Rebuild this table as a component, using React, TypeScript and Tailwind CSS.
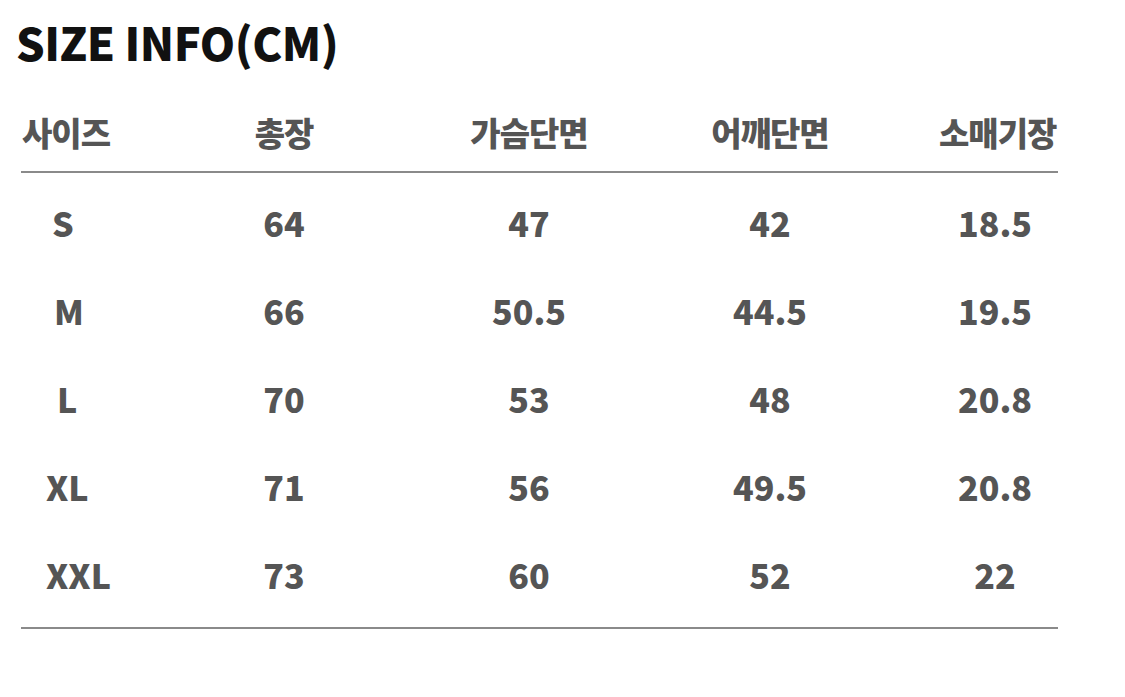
import React from "react";

const rows: { cells: string[]; pad: string }[] = [
  { cells: ["S", "64", "47", "42", "18.5"], pad: "pl-[31px]" },
  { cells: ["M", "66", "50.5", "44.5", "19.5"], pad: "pl-[33px]" },
  { cells: ["L", "70", "53", "48", "20.8"], pad: "pl-[36px]" },
  { cells: ["XL", "71", "56", "49.5", "20.8"], pad: "pl-[25px]" },
  { cells: ["XXL", "73", "60", "52", "22"], pad: "pl-[25px]" },
];

const headers = ["사이즈", "총장", "가슴단면", "어깨단면", "소매기장"];

const grid = "grid grid-cols-[90px_346px_144px_338px_112px]";

export default function App() {
  return (
    <div
      className="w-[1125px] h-[697px] bg-white overflow-hidden"
      style={{ fontFamily: '"Noto Sans CJK KR", "Noto Sans", sans-serif' }}
    >
      <div className="pt-[11px] pl-[16px]">
        <h1 className="text-[45px] leading-[62px] font-black text-[#111] tracking-[-0.5px] whitespace-nowrap">
          SIZE INFO(CM)
        </h1>
      </div>
      <div className="ml-[21px] w-[1037px] mt-[38px]">
        <div
          className={`${grid} h-[42px] items-center text-[33px] font-black text-[#555] tracking-[-1px] whitespace-nowrap`}
        >
          {headers.map((h) => (
            <div key={h} className="text-center leading-none">
              {h}
            </div>
          ))}
        </div>
        <div className="h-[2px] bg-[#8a8a8a] mt-[18px]" />
        <div className="pt-[6px] pb-[8px]">
          {rows.map((r) => (
            <div
              key={r.cells[0]}
              className={`${grid} h-[88px] items-center text-[34px] font-black text-[#555] whitespace-nowrap`}
            >
              {r.cells.map((c, i) => (
                <div
                  key={i}
                  className={`leading-none ${i === 0 ? `text-left ${r.pad}` : "text-center"}`}
                >
                  {c}
                </div>
              ))}
            </div>
          ))}
        </div>
        <div className="h-[2px] bg-[#8a8a8a]" />
      </div>
    </div>
  );
}
